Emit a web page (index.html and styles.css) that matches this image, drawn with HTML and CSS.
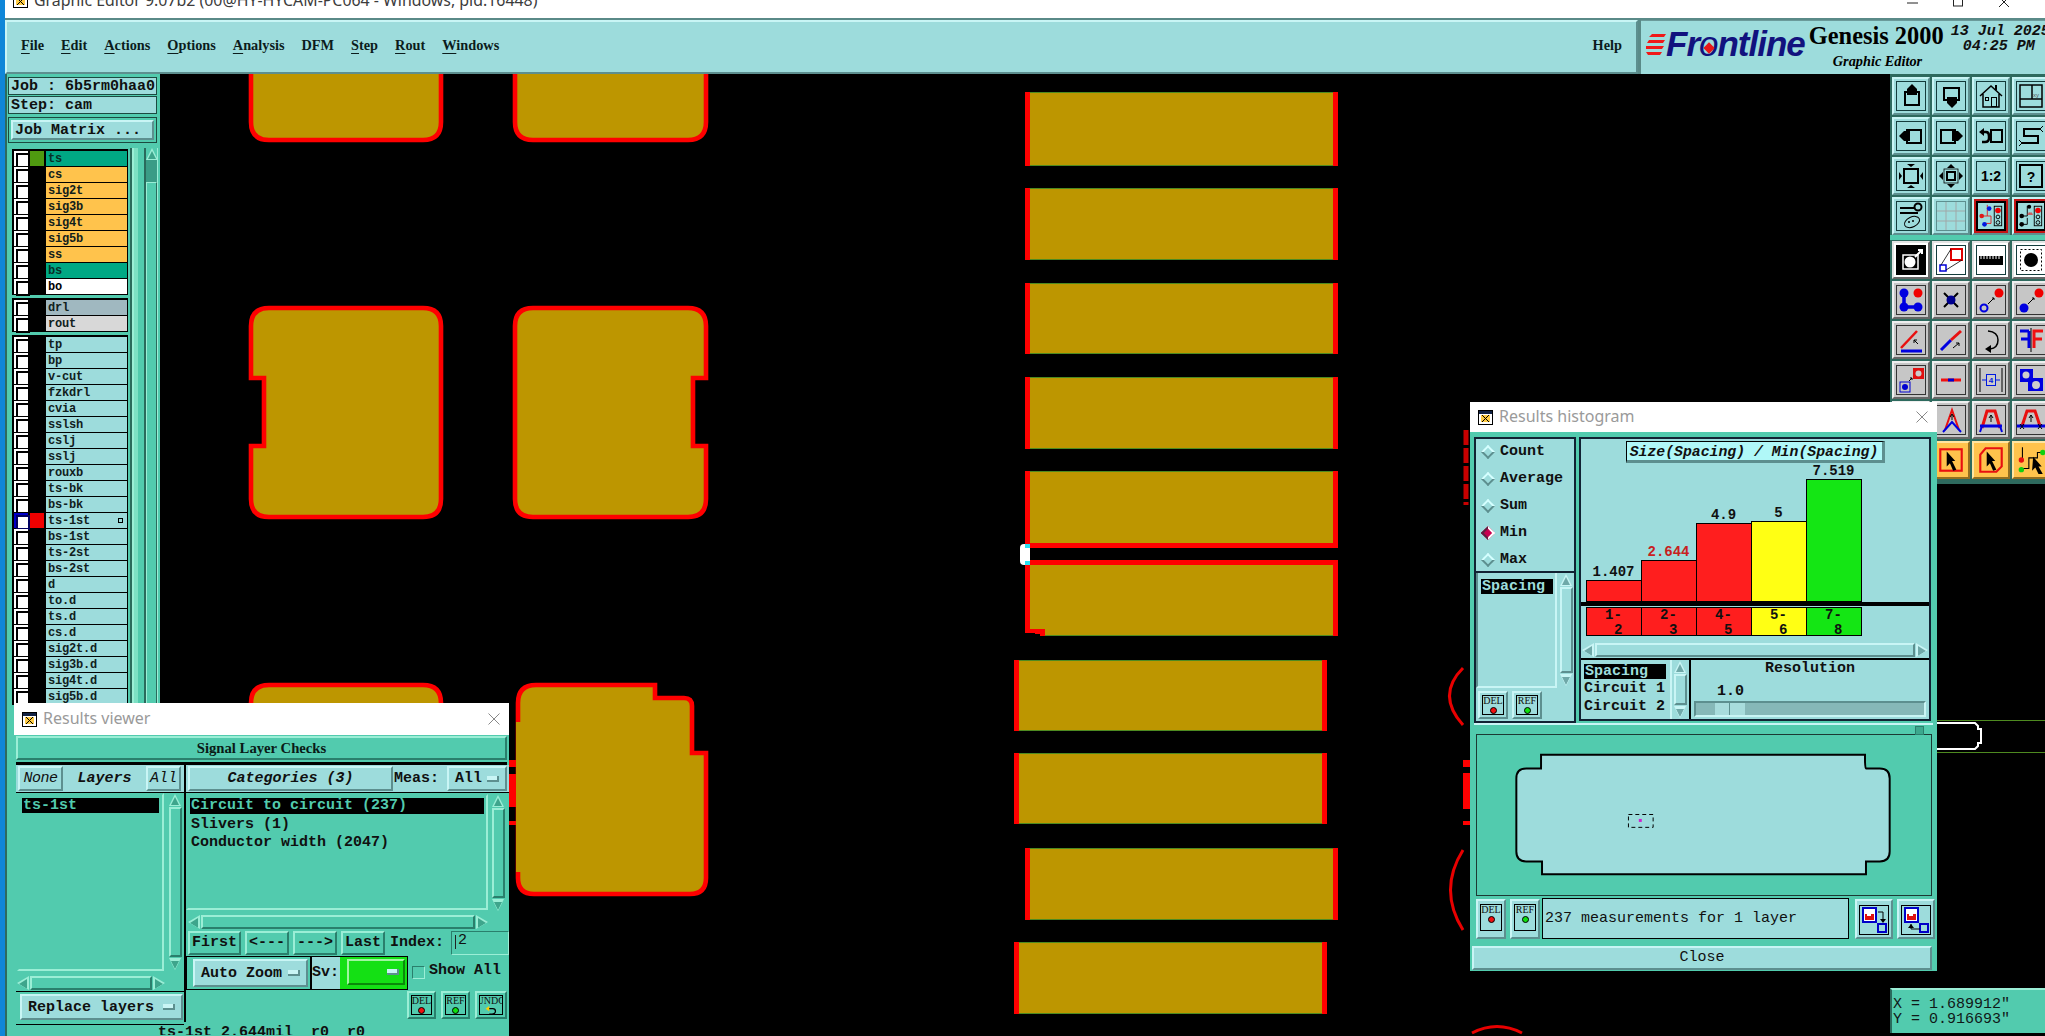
FILE: index.html
```html
<!DOCTYPE html>
<html lang="en">
<head>
<meta charset="utf-8">
<title>Graphic Editor</title>
<link rel="stylesheet" href="styles.css">
</head>
<body>
<div class="app">
  <header class="titlebar">
    <svg class="winicon" viewBox="0 0 15 15"><rect x=".5" y=".5" width="14" height="14" fill="#fff" stroke="#000"/><rect x="1" y="1" width="13" height="3" fill="#124"/><rect x="3" y="5" width="9" height="7" fill="#fc4"/><path d="M4 5l7 7M11 5l-7 7" stroke="#000"/></svg>
    <span class="titletext">Graphic Editor 9.07b2 (00@HY-HYCAM-PC064 - Windows, pid:16448)</span>
    <div class="wincontrols">
      <svg viewBox="0 0 46 10"><path d="M0 3h11" stroke="#222"/></svg>
      <svg viewBox="0 0 46 10"><rect x=".5" y="-2" width="9" height="8" fill="none" stroke="#222"/></svg>
      <svg viewBox="0 0 46 10"><path d="M0 -3l10 10M10 -3l-10 10" stroke="#222"/></svg>
    </div>
  </header>

  <div class="topbar">
    <nav class="menubar">
      <span class="menu"><u>F</u>ile</span>
      <span class="menu"><u>E</u>dit</span>
      <span class="menu"><u>A</u>ctions</span>
      <span class="menu"><u>O</u>ptions</span>
      <span class="menu"><u>A</u>nalysis</span>
      <span class="menu">DFM</span>
      <span class="menu"><u>S</u>tep</span>
      <span class="menu"><u>R</u>out</span>
      <span class="menu"><u>W</u>indows</span>
      <span class="menu help">Help</span>
    </nav>
    <div class="brand">
      <svg class="stripes" viewBox="0 0 20 24"><path d="M6 1H20L18 4H3ZM3 7H19L17 10H1ZM0 13H18L16 16H0ZM0 19H16L14 22H2Z" fill="#f01818"/></svg>
      <span class="frontline">Fr<span class="fl-o">o<i class="fl-dia"></i></span>ntline</span>
      <div class="genesis">
        <div class="gen-big">Genesis 2000</div>
        <div class="gen-small">Graphic Editor</div>
      </div>
      <div class="datebox"><div>13 Jul 2025</div><div class="timeline">04:25 PM</div></div>
    </div>
  </div>

  <div class="workspace">
    <aside class="side">
      <div class="info">Job : 6b5rm0haa0</div>
      <div class="info">Step: cam</div>
      <div class="jobwrap"><div class="raised-c jobbtn">Job Matrix ...</div></div>
      <div class="layerarea">
        <div class="layercol">
          <div class="lgroup">
            <div class="lrow"><i class="chk"></i><i class="sw sw-green"></i><span class="lab board">ts</span></div>
            <div class="lrow"><i class="chk"></i><i class="sw"></i><span class="lab sig">cs</span></div>
            <div class="lrow"><i class="chk"></i><i class="sw"></i><span class="lab sig">sig2t</span></div>
            <div class="lrow"><i class="chk"></i><i class="sw"></i><span class="lab sig">sig3b</span></div>
            <div class="lrow"><i class="chk"></i><i class="sw"></i><span class="lab sig">sig4t</span></div>
            <div class="lrow"><i class="chk"></i><i class="sw"></i><span class="lab sig">sig5b</span></div>
            <div class="lrow"><i class="chk"></i><i class="sw"></i><span class="lab sig">ss</span></div>
            <div class="lrow"><i class="chk"></i><i class="sw"></i><span class="lab board">bs</span></div>
            <div class="lrow"><i class="chk"></i><i class="sw"></i><span class="lab white">bo</span></div>
          </div>
          <div class="lgroup">
            <div class="lrow"><i class="chk"></i><i class="sw"></i><span class="lab drl">drl</span></div>
            <div class="lrow"><i class="chk"></i><i class="sw"></i><span class="lab rout">rout</span></div>
          </div>
          <div class="lgroup">
            <div class="lrow"><i class="chk"></i><i class="sw"></i><span class="lab">tp</span></div>
            <div class="lrow"><i class="chk"></i><i class="sw"></i><span class="lab">bp</span></div>
            <div class="lrow"><i class="chk"></i><i class="sw"></i><span class="lab">v-cut</span></div>
            <div class="lrow"><i class="chk"></i><i class="sw"></i><span class="lab">fzkdrl</span></div>
            <div class="lrow"><i class="chk"></i><i class="sw"></i><span class="lab">cvia</span></div>
            <div class="lrow"><i class="chk"></i><i class="sw"></i><span class="lab">sslsh</span></div>
            <div class="lrow"><i class="chk"></i><i class="sw"></i><span class="lab">cslj</span></div>
            <div class="lrow"><i class="chk"></i><i class="sw"></i><span class="lab">sslj</span></div>
            <div class="lrow"><i class="chk"></i><i class="sw"></i><span class="lab">rouxb</span></div>
            <div class="lrow"><i class="chk"></i><i class="sw"></i><span class="lab">ts-bk</span></div>
            <div class="lrow"><i class="chk"></i><i class="sw"></i><span class="lab">bs-bk</span></div>
            <div class="lrow"><i class="chk chk-blue"></i><i class="sw sw-red"></i><span class="lab">ts-1st<i class="lmark"></i></span></div>
            <div class="lrow"><i class="chk"></i><i class="sw"></i><span class="lab">bs-1st</span></div>
            <div class="lrow"><i class="chk"></i><i class="sw"></i><span class="lab">ts-2st</span></div>
            <div class="lrow"><i class="chk"></i><i class="sw"></i><span class="lab">bs-2st</span></div>
            <div class="lrow"><i class="chk"></i><i class="sw"></i><span class="lab">d</span></div>
            <div class="lrow"><i class="chk"></i><i class="sw"></i><span class="lab">to.d</span></div>
            <div class="lrow"><i class="chk"></i><i class="sw"></i><span class="lab">ts.d</span></div>
            <div class="lrow"><i class="chk"></i><i class="sw"></i><span class="lab">cs.d</span></div>
            <div class="lrow"><i class="chk"></i><i class="sw"></i><span class="lab">sig2t.d</span></div>
            <div class="lrow"><i class="chk"></i><i class="sw"></i><span class="lab">sig3b.d</span></div>
            <div class="lrow"><i class="chk"></i><i class="sw"></i><span class="lab">sig4t.d</span></div>
            <div class="lrow"><i class="chk"></i><i class="sw"></i><span class="lab">sig5b.d</span></div>
          </div>
        </div>
        <div class="lstripe"></div>
        <div class="lscroll"><i class="arr arr-up"></i><i class="ltrough"></i><i class="lthumb"></i></div>
      </div>
    </aside>

    <main class="canvas">
      <svg class="board-svg" viewBox="160 74 1885 962" preserveAspectRatio="none">
        <g class="pad">
          <path d="M251 50V122Q251 140 269 140H423Q441 140 441 122V50Z"/>
          <path d="M515 50V122Q515 140 533 140H688Q706 140 706 122V50Z"/>
          <path d="M269 308H423Q441 308 441 326V499Q441 517 423 517H269Q251 517 251 499V446H264V378H251V326Q251 308 269 308Z"/>
          <path d="M533 308H688Q706 308 706 326V378H693V446H706V499Q706 517 688 517H533Q515 517 515 499V326Q515 308 533 308Z"/>
          <path d="M251 740V703Q251 685 269 685H423Q441 685 441 703V740Z"/>
          <path d="M536 685H655V698H684Q692 698 692 706V753H706V878Q706 894 690 894H534Q518 894 518 878V703Q518 685 536 685Z"/>
        </g>
        <rect class="cu" x="516" y="722" width="5" height="150"/>
        <g class="red">
          <rect x="509" y="760" width="7" height="7"/><rect x="509" y="774" width="7" height="33"/><rect x="509" y="821" width="7" height="4"/>
        </g>
        <g class="strip">
          <rect x="1025" y="92" width="313" height="74"/>
          <rect x="1025" y="188" width="313" height="72"/>
          <rect x="1025" y="283" width="313" height="71"/>
          <rect x="1025" y="377" width="313" height="72"/>
          <rect x="1025" y="471" width="313" height="74"/>
          <rect x="1014" y="660" width="313" height="71"/>
          <rect x="1014" y="753" width="313" height="71"/>
          <rect x="1025" y="848" width="313" height="72"/>
          <rect x="1014" y="942" width="313" height="72"/>
        </g>
        <g class="red">
          <rect x="1025" y="92" width="5" height="74"/><rect x="1333" y="92" width="5" height="74"/>
          <rect x="1025" y="188" width="5" height="72"/><rect x="1333" y="188" width="5" height="72"/>
          <rect x="1025" y="283" width="5" height="71"/><rect x="1333" y="283" width="5" height="71"/>
          <rect x="1025" y="377" width="5" height="72"/><rect x="1333" y="377" width="5" height="72"/>
          <rect x="1025" y="471" width="5" height="74"/><rect x="1333" y="471" width="5" height="77"/>
          <rect x="1025" y="543" width="313" height="5"/>
          <rect x="1014" y="660" width="5" height="71"/><rect x="1322" y="660" width="5" height="71"/>
          <rect x="1014" y="753" width="5" height="71"/><rect x="1322" y="753" width="5" height="71"/>
          <rect x="1025" y="848" width="5" height="72"/><rect x="1333" y="848" width="5" height="72"/>
          <rect x="1014" y="942" width="5" height="72"/><rect x="1322" y="942" width="5" height="72"/>
        </g>
        <path class="cu" d="M1030 565H1333V636H1045V629H1030Z"/>
        <path class="red" d="M1025 560H1338V636H1333V565H1030V629H1045V636H1040V634H1035V633H1025Z"/>
        <path class="gline" d="M1030 92.500H1333M1030 165.500H1333M1030 188.500H1333M1030 259.500H1333M1030 283.500H1333M1030 353.500H1333M1030 377.500H1333M1030 448.500H1333M1030 471.500H1333M1045 635.500H1333M1019 660.500H1322M1019 730.500H1322M1019 753.500H1322M1019 823.500H1322M1030 848.500H1333M1030 919.500H1333M1019 942.500H1322M1019 1013.500H1322"/>
        <rect x="1020" y="544" width="10" height="21" rx="4" fill="#fff"/>
        <rect x="1025" y="544" width="5" height="4" fill="#28e0f0"/><rect x="1025" y="561" width="5" height="4" fill="#28e0f0"/>
        <g class="redline">
          <path d="M1463 668Q1436 695 1463 725"/>
          <path d="M1463 850Q1438 890 1463 930"/>
          <path d="M1472 1033Q1497 1020 1522 1033"/>
        </g>
        <path class="dash" d="M1466 430V505"/>
        <g class="red">
          <rect x="1463" y="760" width="7" height="7"/><rect x="1463" y="773" width="7" height="36"/><rect x="1463" y="821" width="7" height="4"/>
        </g>
        <path class="gline" d="M1937 720.500H2045M1937 752.500H2045"/>
        <path class="wline" d="M1937 723H1975L1978 726V729H1981V743H1978V746L1975 749H1937"/>
      </svg>

      <div class="toolbox">
        <div class="tbgroup">
          <button class="tb"><svg class="ic" viewBox="0 0 28 28"><rect x="8" y="10" width="14" height="13" fill="none" stroke="#000" stroke-width="2"/><path d="M15 2l5 5v6H10V7z"/></svg></button>
          <button class="tb"><svg class="ic" viewBox="0 0 28 28"><rect x="7" y="6" width="15" height="12" fill="none" stroke="#000" stroke-width="2"/><path d="M15 26l5-5v-6H10v6z"/></svg></button>
          <button class="tb"><svg class="ic" viewBox="0 0 28 28"><path d="M3 14L14 4 25 14M6 12V25H22V12" fill="none" stroke="#000" stroke-width="1.500"/><path d="M19 8V3" stroke="#000" stroke-width="2"/><rect x="14.500" y="15.500" width="5" height="9" fill="none" stroke="#000"/><rect x="8.500" y="15.500" width="3" height="3" fill="none" stroke="#000"/></svg></button>
          <button class="tb"><svg class="ic" viewBox="0 0 28 28"><rect x="3" y="3" width="22" height="22" fill="none" stroke="#000" stroke-width="1.500"/><path d="M3 17H25M15 3V17" stroke="#000" stroke-width="1.500"/><text x="16" y="15" class="tiny">xy</text></svg></button>

          <button class="tb"><svg class="ic" viewBox="0 0 28 28"><rect x="10" y="8" width="14" height="13" fill="none" stroke="#000" stroke-width="2"/><path d="M2 14l5-5h6v10H7z"/></svg></button>
          <button class="tb"><svg class="ic" viewBox="0 0 28 28"><rect x="4" y="8" width="14" height="13" fill="none" stroke="#000" stroke-width="2"/><path d="M26 14l-5-5h-6v10h6z"/></svg></button>
          <button class="tb"><svg class="ic" viewBox="0 0 28 28"><rect x="14" y="8" width="11" height="12" fill="none" stroke="#000" stroke-width="2"/><path d="M7 10h2q3 0 3 4v2q0 4-4 4H5" fill="none" stroke="#000" stroke-width="2.500"/><path d="M2 10l5-4v8z"/></svg></button>
          <button class="tb"><svg class="ic" viewBox="0 0 28 28"><path d="M23 7H7V14H21V21H5" fill="none" stroke="#000" stroke-width="2"/><path d="M23 7l3-3M23 7l3 3M5 21l-3-3M5 21l-3 3" stroke="#000"/></svg></button>

          <button class="tb"><svg class="ic" viewBox="0 0 28 28"><rect x="7" y="7" width="14" height="14" fill="none" stroke="#000" stroke-width="2"/><path d="M14 5l-4-3h8zM14 23l-4 3h8zM5 14l-3-4v8zM23 14l3-4v8z"/></svg></button>
          <button class="tb"><svg class="ic" viewBox="0 0 28 28"><rect x="10" y="10" width="8" height="8" fill="none" stroke="#000" stroke-width="2"/><rect x="7" y="7" width="14" height="14" fill="none" stroke="#000" stroke-width=".8"/><path d="M14 2l-4 4h8zM14 26l-4-4h8zM2 14l4-4v8zM26 14l-4-4v8z"/></svg></button>
          <button class="tb"><svg class="ic" viewBox="0 0 28 28"><text x="14" y="19" class="ratio">1:2</text></svg></button>
          <button class="tb"><svg class="ic" viewBox="0 0 28 28"><rect x="3" y="3" width="22" height="22" fill="none" stroke="#000" stroke-width="2"/><text x="14" y="20" class="ratio">?</text></svg></button>

          <button class="tb"><svg class="ic" viewBox="0 0 28 28"><path d="M3 6H18M3 11H21" stroke="#000" stroke-width="2"/><circle cx="21" cy="5" r="3.500" fill="none" stroke="#000" stroke-width="2"/><ellipse cx="15" cy="20" rx="8" ry="5" fill="none" stroke="#000" transform="rotate(-25 15 20)"/><circle cx="12" cy="20" r="1"/><circle cx="16" cy="19" r="1"/></svg></button>
          <button class="tb"><svg class="ic ic-soft" viewBox="0 0 28 28"><path d="M9 0V28M19 0V28M0 9H28M0 19H28" stroke="#a0a8a8"/></svg></button>
          <button class="tb"><svg class="ic ic-red" viewBox="0 0 28 28"><path d="M10 2V14H14V22H7M2 14H10" fill="none" stroke="#e02020"/><circle cx="12" cy="6" r="2.500" fill="#0018e0"/><circle cx="4" cy="14" r="2.500" fill="#e01818"/><circle cx="7" cy="23" r="2.500" fill="#0018e0"/><rect x="17.500" y="3.500" width="8" height="21" fill="none" stroke="#000"/><circle cx="21.500" cy="8" r="3" fill="#f00000"/><circle cx="21.500" cy="15" r="2" fill="none" stroke="#000"/><circle cx="21.500" cy="21" r="2" fill="none" stroke="#000"/></svg></button>
          <button class="tb"><svg class="ic ic-red" viewBox="0 0 28 28"><path d="M10 3V14M3 14H10M10 16V23H4" fill="none" stroke="#000"/><path d="M10 12H16M12 10V12M14 10V12" stroke="#e02020"/><circle cx="12" cy="4" r="2.200"/><circle cx="4" cy="14" r="2.500"/><circle cx="4" cy="23" r="2.500"/><rect x="17.500" y="3.500" width="8" height="21" fill="none" stroke="#000"/><circle cx="21.500" cy="8" r="3" fill="#f00000"/><circle cx="21.500" cy="15" r="2" fill="none" stroke="#000"/><circle cx="21.500" cy="21" r="2" fill="none" stroke="#000"/></svg></button>
        </div>
        <div class="tbgroup tbgroup2">
          <button class="tb tb-on"><svg class="ic ic-dark" viewBox="0 0 28 28"><rect x="6" y="9" width="15" height="14" fill="none" stroke="#fff" stroke-width="1.500"/><circle cx="13" cy="16" r="5.500" fill="#fff"/><path d="M18 11l7-7M21 4h4v4" stroke="#fff" stroke-width="2" fill="none"/></svg></button>
          <button class="tb tb-on"><svg class="ic" viewBox="0 0 28 28"><rect x="14" y="3" width="11" height="11" fill="none" stroke="#e00000" stroke-width="2"/><rect x="3" y="19" width="6" height="6" fill="none" stroke="#0000d8" stroke-width="1.500"/><path d="M14 3L4 19M25 14L9 24" stroke="#000" stroke-width=".8"/></svg></button>
          <button class="tb tb-on"><svg class="ic" viewBox="0 0 28 28"><path d="M2 10H26V19H2Z"/><path d="M4 9V13M7 9V13M10 9V13M13 9V13M16 9V13M19 9V13M22 9V13" stroke="#fff"/></svg></button>
          <button class="tb tb-on"><svg class="ic" viewBox="0 0 28 28"><rect x="3.500" y="3.500" width="21" height="21" fill="none" stroke="#000" stroke-dasharray="2 2"/><circle cx="14" cy="14" r="7"/></svg></button>

          <button class="tb tb-g"><svg class="ic" viewBox="0 0 28 28"><path d="M7 7V21H21" fill="none" stroke="#0000e0" stroke-width="3.500"/><circle cx="7" cy="7" r="4.500" fill="#0000e0"/><circle cx="7" cy="21" r="4.500" fill="#0000e0"/><circle cx="21" cy="21" r="4.500" fill="#0000e0"/><circle cx="21" cy="7" r="4.500" fill="#f00000"/></svg></button>
          <button class="tb tb-g"><svg class="ic" viewBox="0 0 28 28"><path d="M7 7L21 21M21 7L7 21" stroke="#000" stroke-width="2"/><circle cx="14" cy="14" r="4.500" fill="#000090"/></svg></button>
          <button class="tb tb-g"><svg class="ic" viewBox="0 0 28 28"><circle cx="22" cy="7" r="4.500" fill="#f00000"/><circle cx="7" cy="22" r="3.500" fill="none" stroke="#0000e0" stroke-width="2"/><path d="M11 18L17 12M15 12H17V14" stroke="#000" fill="none"/></svg></button>
          <button class="tb tb-g"><svg class="ic" viewBox="0 0 28 28"><circle cx="22" cy="7" r="4.500" fill="#f00000"/><circle cx="7" cy="22" r="4.500" fill="#0000e0"/><path d="M11 18L17 12M15 12H17V14" stroke="#000" fill="none"/></svg></button>

          <button class="tb tb-g"><svg class="ic" viewBox="0 0 28 28"><path d="M4 22L20 5" stroke="#e81010" stroke-width="2.500"/><path d="M4 25H25" stroke="#0000e0" stroke-width="3"/><path d="M21 18L17 14M17 17V14H20" stroke="#000" fill="none"/></svg></button>
          <button class="tb tb-g"><svg class="ic" viewBox="0 0 28 28"><path d="M4 24L14 14" stroke="#0000e0" stroke-width="3"/><path d="M14 14L24 5" stroke="#e81010" stroke-width="3"/><path d="M16 22L22 17M19 17H22V20" stroke="#000" fill="none"/></svg></button>
          <button class="tb tb-g"><svg class="ic" viewBox="0 0 28 28"><path d="M11 5Q21 6 21 14T13 23" fill="none" stroke="#000" stroke-width="1.500"/><path d="M8 23l6-4v8z"/></svg></button>
          <button class="tb tb-g"><svg class="ic" viewBox="0 0 28 28"><path d="M12 5H3M12 5V22M12 13H4" fill="none" stroke="#0000e0" stroke-width="3"/><path d="M14 2V26" stroke="#000"/><path d="M17 22V5H26M17 13H25" fill="none" stroke="#f01010" stroke-width="3"/></svg></button>

          <button class="tb tb-g"><svg class="ic" viewBox="0 0 28 28"><rect x="16" y="2" width="11" height="11" fill="#e01010"/><circle cx="21.500" cy="7.500" r="3" fill="#ccc"/><rect x="3" y="16" width="10" height="10" fill="none" stroke="#0000d0"/><circle cx="8" cy="21" r="3" fill="#0000d0"/><path d="M12 15L15 12M13 12H15V14" stroke="#000" fill="none"/></svg></button>
          <button class="tb tb-g"><svg class="ic" viewBox="0 0 28 28"><path d="M4 14H24" stroke="#f01010" stroke-width="3"/><path d="M11 14H17" stroke="#0000d0" stroke-width="3"/></svg></button>
          <button class="tb tb-g"><svg class="ic" viewBox="0 0 28 28"><path d="M3 2V26M25 2V26" stroke="#000"/><path d="M5 14H23" stroke="#0018e0"/><rect x="9.500" y="8.500" width="9" height="11" fill="#ccc" stroke="#0018e0"/><text x="14" y="17" class="tiny4">4</text></svg></button>
          <button class="tb tb-g"><svg class="ic" viewBox="0 0 28 28"><rect x="3" y="3" width="13" height="13" fill="#0000e0"/><rect x="11" y="12" width="15" height="13" fill="#0000e0"/><circle cx="9" cy="9" r="3.500" fill="#ccc"/><circle cx="19" cy="19" r="4" fill="#ccc"/></svg></button>

          <button class="tb tb-g"><svg class="ic" viewBox="0 0 28 28"></svg></button>
          <button class="tb tb-g"><svg class="ic" viewBox="0 0 28 28"><path d="M8 24L15 4 22 24" fill="none" stroke="#e81010" stroke-width="2"/><path d="M6 26L15 16 24 26" fill="none" stroke="#0000e0" stroke-width="2"/><path d="M15 9V14M13 11L15 8 17 11" stroke="#000" fill="none"/></svg></button>
          <button class="tb tb-g"><svg class="ic" viewBox="0 0 28 28"><path d="M5 22L10 5H18L23 22" fill="none" stroke="#e81010" stroke-width="3"/><path d="M3 20H25" stroke="#0000e0" stroke-width="3"/><path d="M3 26L5 20M25 26L23 20" stroke="#0000e0" stroke-width="2"/><path d="M14 9V16M12 12L14 9 16 12" stroke="#000" fill="none"/></svg></button>
          <button class="tb tb-g"><svg class="ic" viewBox="0 0 28 28"><path d="M5 20L10 5H18L23 20" fill="none" stroke="#e81010" stroke-width="3"/><path d="M0 20H28" stroke="#0000e0" stroke-width="3"/><path d="M3 18L7 23M7 18L3 23M21 18L25 23M25 18L21 23" stroke="#000"/><path d="M14 9V16M12 12L14 9 16 12" stroke="#000" fill="none"/></svg></button>

          <button class="tb tb-o"><svg class="ic" viewBox="0 0 28 28"></svg></button>
          <button class="tb tb-o"><svg class="ic" viewBox="0 0 28 28"><rect x="4" y="4" width="20" height="20" fill="none" stroke="#e81010" stroke-width="2"/><path d="M10 6L18 15H15L19 23 16 24 13 17 10 20Z"/></svg></button>
          <button class="tb tb-o"><svg class="ic" viewBox="0 0 28 28"><path d="M9 3H24V20L19 25H4V9Z" fill="none" stroke="#e81010" stroke-width="2"/><path d="M10 6L18 15H15L19 23 16 24 13 17 10 20Z"/></svg></button>
          <button class="tb tb-o"><svg class="ic" viewBox="0 0 28 28"><path d="M6 2V14M6 22H12V12H20V7H27" fill="none" stroke="#000"/><circle cx="5" cy="14" r="2.500" fill="#e81010"/><circle cx="5" cy="23" r="2.500" fill="#10d010"/><circle cx="25" cy="7" r="2.500" fill="#10d010"/><path d="M16 11L24 20H21L25 27H21L18 21 15 24Z"/></svg></button>
        </div>
      </div>

      <div class="coords"><div>X = 1.689912"</div><div>Y = 0.916693"</div></div>
    </main>
  </div>
</div>

<section class="rv window">
  <div class="wtitle">
    <svg class="winicon" viewBox="0 0 15 15"><rect x=".5" y=".5" width="14" height="14" fill="#fff" stroke="#000"/><rect x="1" y="1" width="13" height="3" fill="#124"/><rect x="3" y="5" width="9" height="7" fill="#fc4"/><path d="M4 5l7 7M11 5l-7 7" stroke="#000"/></svg>
    <span>Results viewer</span>
    <svg class="wclose" viewBox="0 0 12 12"><path d="M.5.5l11 11M11.500.5l-11 11" stroke="#888"/></svg>
  </div>
  <div class="rv-body">
    <div class="rv-bar raised-t">Signal Layer Checks</div>
    <div class="rv-main">
      <div class="rv-left">
        <div class="rv-head">
          <span class="raised-c btn-i btn-none">None</span>
          <span class="rv-headlabel">Layers</span>
          <span class="raised-c btn-i btn-all">All</span>
        </div>
        <div class="rv-lists">
          <div class="sunk-t list-left"><div class="sel">ts-1st</div></div>
          <div class="vsb"><i class="arr arr-up"></i><i class="thumb"></i><i class="arr arr-down"></i></div>
        </div>
        <div class="hsb hsb-left"><i class="arr arr-left"></i><i class="thumb"></i><i class="arr arr-right"></i></div>
        <div class="rv-replace"><div class="raised-c dd replace">Replace layers<i class="ddmark"></i></div></div>
      </div>
      <div class="rv-right">
        <div class="rv-head rv-head-r">
          <span class="raised-c btn-i btn-cat">Categories (3)</span>
          <span class="meas">Meas:</span>
          <div class="raised-c dd measdd">All<i class="ddmark"></i></div>
        </div>
        <div class="rv-lists rv-lists-r">
          <div class="sunk-t list-right">
            <div class="sel">Circuit to circuit (237)</div>
            <div class="item">Slivers (1)</div>
            <div class="item">Conductor width (2047)</div>
          </div>
          <div class="vsb"><i class="arr arr-up"></i><i class="thumb"></i><i class="arr arr-down"></i></div>
        </div>
        <div class="hsb hsb-right"><i class="arr arr-left"></i><i class="thumb"></i><i class="arr arr-right"></i></div>
        <div class="navrow">
          <span class="raised-t nav nav-l">First</span>
          <span class="raised-t nav">&lt;---</span>
          <span class="raised-t nav">---&gt;</span>
          <span class="raised-t nav">Last</span>
          <span class="navlabel">Index:</span>
          <span class="indexinput">2<i class="ibeam"></i></span>
        </div>
        <div class="zoomrow">
          <div class="zoombox">
            <div class="zoompad"><div class="raised-c dd autozoom">Auto Zoom<i class="ddmark"></i></div></div>
            <span class="svlabel">Sv:</span>
            <div class="svgreen"><div class="svbtn"><i class="ddmark"></i></div></div>
          </div>
          <i class="showchk"></i>
          <span class="showlabel">Show All</span>
        </div>
        <div class="toolrow">
          <div class="raised-t toolbtn"><div class="toolin"><span>DEL</span><i class="dot dot-r"></i></div></div>
          <div class="raised-t toolbtn"><div class="toolin"><span>REF</span><i class="dot dot-g"></i></div></div>
          <div class="raised-t toolbtn toolwide"><div class="toolin"><span>UNDO</span><svg class="undo" viewBox="0 0 12 9"><path d="M3 3h5q3 0 3 3t-4 3H4" fill="none" stroke="#000" stroke-width="1.400"/><path d="M0 3l4-3v6z" fill="#fc0"/></svg></div></div>
        </div>
      </div>
    </div>
    <div class="rv-status">ts-1st 2.644mil  r0  r0</div>
  </div>
</section>

<section class="hist window">
  <div class="wtitle">
    <svg class="winicon" viewBox="0 0 15 15"><rect x=".5" y=".5" width="14" height="14" fill="#fff" stroke="#000"/><rect x="1" y="1" width="13" height="3" fill="#124"/><rect x="3" y="5" width="9" height="7" fill="#fc4"/><path d="M4 5l7 7M11 5l-7 7" stroke="#000"/></svg>
    <span>Results histogram</span>
    <svg class="wclose" viewBox="0 0 12 12"><path d="M.5.5l11 11M11.500.5l-11 11" stroke="#888"/></svg>
  </div>
  <div class="hist-body">
    <div class="hist-top">
      <div class="hist-left">
        <div class="radios">
          <div class="radio"><i class="dia"></i>Count</div>
          <div class="radio"><i class="dia"></i>Average</div>
          <div class="radio"><i class="dia"></i>Sum</div>
          <div class="radio"><i class="dia dia-on"></i>Min</div>
          <div class="radio"><i class="dia"></i>Max</div>
        </div>
        <div class="metricbox">
          <div class="metriclist">
            <div class="sunk-c metricsunk"><div class="sel sel-c">Spacing</div></div>
            <div class="vsb vsb-c"><i class="arr arr-up"></i><i class="thumb"></i><i class="arr arr-down"></i></div>
          </div>
          <div class="metricbtns">
            <div class="raised-c toolbtn"><div class="toolin"><span>DEL</span><i class="dot dot-r"></i></div></div>
            <div class="raised-c toolbtn"><div class="toolin"><span>REF</span><i class="dot dot-g"></i></div></div>
          </div>
        </div>
      </div>
      <div class="chart">
        <div class="chart-title">Size(Spacing) / Min(Spacing)</div>
        <div class="bars">
          <div class="barcol"><span class="val">1.407</span><i class="bar b-red" style="height:22px"></i></div>
          <div class="barcol"><span class="val val-red">2.644</span><i class="bar b-red" style="height:42px"></i></div>
          <div class="barcol"><span class="val">4.9</span><i class="bar b-red" style="height:79px"></i></div>
          <div class="barcol"><span class="val">5</span><i class="bar b-yel" style="height:81px"></i></div>
          <div class="barcol"><span class="val">7.519</span><i class="bar b-grn" style="height:123px"></i></div>
        </div>
        <div class="cells">
          <div class="cell b-red"><span>1-</span><span class="c2">2</span></div>
          <div class="cell b-red"><span>2-</span><span class="c2">3</span></div>
          <div class="cell b-red"><span>4-</span><span class="c2">5</span></div>
          <div class="cell b-yel"><span>5-</span><span class="c2">6</span></div>
          <div class="cell b-grn"><span>7-</span><span class="c2">8</span></div>
        </div>
        <div class="hsb hsb-c"><i class="arr arr-left"></i><i class="thumb"></i><i class="arr arr-right"></i></div>
        <div class="chart-foot">
          <div class="footlist">
            <div class="sel sel-c footsel">Spacing</div>
            <div>Circuit 1</div>
            <div>Circuit 2</div>
          </div>
          <div class="vsb vsb-c footsb"><i class="arr arr-up"></i><i class="thumb"></i><i class="arr arr-down"></i></div>
          <div class="res">
            <div class="res-title">Resolution</div>
            <div class="res-val">1.0</div>
            <div class="res-track"><i class="res-thumb"></i></div>
          </div>
        </div>
      </div>
    </div>
    <div class="sash"><i class="sashmark"></i></div>
    <div class="overview">
      <svg class="ov-svg" viewBox="0 0 456 162">
        <path d="M63 20H391V24Q391 34 392 34H406Q416 34 416 44V118Q416 128 406 128H392V141H64V128H48Q38 128 38 118V44Q38 34 48 34H63Z" fill="#9ddcdc" stroke="#000" stroke-width="2"/>
        <rect x="151.500" y="80.500" width="25" height="13" fill="none" stroke="#000" stroke-dasharray="4 3"/>
        <rect x="162" y="85" width="3" height="3" fill="#d020d0"/>
      </svg>
    </div>
    <div class="hist-row">
      <div class="raised-c toolbtn toolbtn-b"><div class="toolin"><span>DEL</span><i class="dot dot-r"></i></div></div>
      <div class="raised-c toolbtn toolbtn-b"><div class="toolin"><span>REF</span><i class="dot dot-g"></i></div></div>
      <div class="msgbox">237 measurements for 1 layer</div>
      <div class="raised-c iconbtn"><svg viewBox="0 0 30 30" class="toolsvg"><rect x=".5" y=".5" width="29" height="29" fill="none" stroke="#000"/><rect x="4" y="3" width="13" height="14" fill="#fff" stroke="#0000c8" stroke-width="2"/><path d="M6 15V9H8V11H12V9H15V15Z" fill="#e01010"/><rect x="19" y="19" width="8" height="8" fill="none" stroke="#0000c8" stroke-width="2"/><path d="M19 7H24V15" fill="none" stroke="#000"/><path d="M21 14H27L24 18Z"/></svg></div>
      <div class="raised-c iconbtn"><svg viewBox="0 0 30 30" class="toolsvg"><rect x=".5" y=".5" width="29" height="29" fill="none" stroke="#000"/><rect x="4" y="3" width="13" height="14" fill="#fff" stroke="#0000c8" stroke-width="2"/><path d="M6 15V9H8V11H12V9H15V15Z" fill="#e01010"/><rect x="19" y="19" width="8" height="8" fill="none" stroke="#0000c8" stroke-width="2"/><path d="M10 19V24H19" fill="none" stroke="#000"/><path d="M7 23H13L10 19Z"/></svg></div>
    </div>
    <div class="raised-c closebtn">Close</div>
  </div>
</section>
</body>
</html>
```
FILE: styles.css
```css
* { box-sizing: border-box; }
html, body { margin: 0; padding: 0; }
body { width: 2045px; height: 1036px; overflow: hidden; background: #0f86d8; position: relative; font-family: "Liberation Mono", monospace; color: #101010; }
i { display: block; font-style: normal; }
button { padding: 0; margin: 0; font: inherit; }

.app { margin-left: 5px; width: 2040px; height: 1036px; display: flex; flex-direction: column; background: #000; }

/* native title bar */
.titlebar { height: 18px; flex: none; background: #fff; display: flex; align-items: flex-start; padding-left: 8px; overflow: hidden; position: relative; }
.titlebar .winicon { margin-top: -7px; flex: none; }
.titletext { font: 15.900px/18px "Noto Sans", sans-serif; color: #3c3c3c; margin: -9px 0 0 6px; white-space: nowrap; }
.wincontrols { margin-left: auto; display: flex; }
.wincontrols svg { width: 46px; height: 10px; overflow: visible; }
.winicon { width: 15px; height: 15px; }

/* top menu + brand */
.topbar { height: 56px; flex: none; display: flex; background: #5a8a88; padding-top: 2px; gap: 3px; }
.menubar { width: 1633px; display: flex; align-items: center; gap: 17px; padding: 0 14px 4px 14px; background: #9ddcdc; border: 2px solid; border-color: #c9f5f5 #5d8f8f #5d8f8f #c9f5f5; font: bold 14.300px "Liberation Serif", serif; color: #0c1c1c; }
.menu { white-space: nowrap; }
.menu u { text-underline-offset: 3px; }
.help { margin-left: auto; }
.brand { flex: 1; position: relative; background: #9ddcdc; border-top: 1px solid #6a9a9a; display: flex; align-items: flex-start; overflow: hidden; padding-left: 5px; }
.stripes { width: 20px; height: 24px; margin-top: 12px; flex: none; }
.frontline { font: italic bold 35px/56px "Liberation Sans", sans-serif; letter-spacing: -1px; color: #12127e; margin-top: -5px; white-space: nowrap; }
.fl-o { position: relative; display: inline-block; font-weight: normal; }
.fl-dia { position: absolute; left: 6px; top: 28px; width: 8px; height: 8px; background: #e81818; transform: rotate(45deg); }
.genesis { margin-left: 4px; flex: none; }
.gen-big { font: bold 24.400px/28px "Liberation Serif", serif; color: #000; margin-top: 1px; white-space: nowrap; }
.gen-small { font: italic bold 14.300px/18px "Liberation Serif", serif; color: #000; margin: 2px 0 0 24px; white-space: nowrap; }
.datebox { margin-left: 7px; font: italic bold 15px/15px "Liberation Mono", monospace; color: #101010; white-space: nowrap; padding-top: 3px; }
.timeline { padding-left: 12px; }

.workspace { flex: 1; display: flex; min-height: 0; }

/* left layer panel */
.side { width: 155px; flex: none; background: #52cbae; border-left: 2px solid #2e6a5e; padding: 3px 3px 0 1px; overflow: hidden; }
.info { height: 18px; border: 1px solid #1c4a40; background: #9ddcdc; font: bold 15px/18px "Liberation Mono", monospace; padding-left: 2px; margin-bottom: 1px; white-space: pre; }
.jobwrap { margin-top: 3px; height: 26px; border: 1px solid #1c4a40; padding: 2px; }
.jobbtn { height: 20px; font: bold 15px/18px "Liberation Mono", monospace; padding-left: 2px; }
.layerarea { display: flex; margin-top: 5px; height: 900px; }
.layercol { width: 122px; padding: 1px 0 0 4px; display: flex; flex-direction: column; gap: 3px; flex: none; }
.lgroup { width: 116px; background: #000; padding: 2px 1px 1px 2px; display: flex; flex-direction: column; gap: 1px; }
.lrow { height: 15px; display: flex; }
.chk { width: 14px; height: 15px; background: #fff; position: relative; flex: none; margin-right: 1px; }
.chk::after { content: ""; position: absolute; left: 2px; top: 2px; width: 10px; height: 11px; border: 2px solid #000; background: #fff; }
.chk-blue { background: #0000c8; }
.chk-blue::after { border-color: #000060; }
.sw { width: 14px; height: 15px; margin: 0 2px 0 1px; background: #000; flex: none; }
.sw-green { background: #4f9a10; }
.sw-red { background: #f00000; }
.lab { flex: 1; background: #9ddcdc; font: bold 12px/16px "Liberation Mono", monospace; letter-spacing: -.2px; padding-left: 2px; position: relative; overflow: hidden; color: #10201c; }
.board { background: #00a884; color: #083028; }
.sig { background: #ffc34c; }
.white { background: #fff; color: #000; }
.drl { background: #a0b8c0; }
.rout { background: #d8d8d8; }
.lmark { position: absolute; right: 4px; top: 5px; width: 5px; height: 5px; border: 1px solid #000; background: #9ddcdc; }
.lstripe { width: 14px; flex: none; background: linear-gradient(90deg, #2a6a5c 0 2px, #9beed6 2px 4px, #7de0c4 4px 8px, #52cbae 8px 14px); }
.lscroll { width: 14px; flex: none; display: flex; flex-direction: column; background: #52cbae; border-left: 2px solid #2a6a5c; border-right: 1px solid #9beed6; }
.ltrough { height: 22px; background: #3a9c86; }
.lthumb { flex: 1; background: #52cbae; border: 1px solid; border-color: #9beed6 #2a6a5c #2a6a5c #9beed6; }

/* bevels */
.raised-c { background: #9ddcdc; border: 2px solid; border-color: #c9f5f5 #5d8f8f #5d8f8f #c9f5f5; }
.raised-t { background: #52cbae; border: 2px solid; border-color: #9beed6 #2a7f6c #2a7f6c #9beed6; }
.sunk-t { background: #52cbae; border: 2px solid; border-color: #2a7f6c #9beed6 #9beed6 #2a7f6c; }
.sunk-c { background: #9ddcdc; border: 2px solid; border-color: #5d8f8f #c9f5f5 #c9f5f5 #5d8f8f; }

/* canvas */
.canvas { flex: 1; position: relative; min-width: 0; background: #000; }
.board-svg { display: block; width: 1885px; height: 962px; }
.pad path { fill: #bd9600; stroke: #ff0000; stroke-width: 4.600; }
.cu { fill: #bd9600; }
.strip rect { fill: #bd9600; }
.red { fill: #ff0000; }
.redline path { fill: none; stroke: #e80000; stroke-width: 3; }
.dash { stroke: #c80000; stroke-width: 5; stroke-dasharray: 15 3; fill: none; }
.gline { fill: none; stroke: #4e8a20; stroke-width: 1; }
.wline { fill: none; stroke: #fff; stroke-width: 2; }

/* right tool panel */
.toolbox { position: absolute; right: 0; top: 0; width: 155px; height: 410px; background: #2e6a5e; padding: 3px 0 0 2px; }
.tbgroup { display: grid; grid-template-columns: repeat(4, 38px); grid-auto-rows: 38px; gap: 2px; }
.tbgroup2 { margin-top: 6px; position: relative; }
.tbgroup2::before { content: ""; position: absolute; left: -2px; right: -30px; top: -6px; height: 5px; background: #52cbae; }
.tb { width: 38px; height: 38px; background: #9ddcdc; border: 2px solid; border-color: #c9f5f5 #5d8f8f #5d8f8f #c9f5f5; display: block; }
.ic { display: block; width: 30px; height: 30px; margin: 2px; border: 1px solid #143c3c; }
.ic-soft { border-color: #5d8f8f; }
.ic-red { border: 2px solid #000; outline: 2px solid #c41414; background: #9ddcdc; }
.ic-dark { background: #000; border-color: #000; }
.tb-on { background: #fff; border-color: #e4e4e4 #666 #666 #e4e4e4; }
.tb-g { background: #c6c6c6; border-color: #efefef #666 #666 #efefef; }
.tb-g .ic { border-color: #333; }
.tb-o { background: #ffc34c; border-color: #ffe4a0 #946f20 #946f20 #ffe4a0; }
.tb-o .ic { border: 0; }
.tiny { font: 6px "Liberation Sans", sans-serif; fill: #555; }
.tiny4 { font: bold 8px "Liberation Sans", sans-serif; fill: #0018e0; text-anchor: middle; }
.ratio { font: bold 14px "Liberation Sans", sans-serif; text-anchor: middle; fill: #000; }

.coords { position: absolute; right: 0; bottom: 3px; width: 155px; height: 45px; background: #52cbae; border-top: 2px solid #9beed6; border-left: 2px solid #2a6a5c; font: 15px/15px "Liberation Mono", monospace; padding: 7px 0 0 1px; color: #101818; }

/* floating windows */
.window { position: absolute; background: #52cbae; }
.wtitle { height: 32px; background: #fff; display: flex; align-items: center; padding: 0 9px 0 8px; font: 16px "Noto Sans", sans-serif; color: #9a9a9a; }
.wtitle span { margin: -2px 0 0 6px; }
.wclose { width: 12px; height: 12px; margin-left: auto; }

/* results viewer */
.rv { left: 14px; top: 703px; width: 495px; height: 333px; overflow: hidden; }
.rv-body { padding: 1px 2px 0; }
.rv-bar { height: 24px; font: bold 14.700px/20px "Liberation Serif", serif; text-align: center; color: #0a1a16; }
.rv-main { margin-top: 2px; border-top: 3px solid #000; display: flex; height: 260px; gap: 2px; background: #000; }
.rv-left { width: 168px; flex: none; background: #52cbae; display: flex; flex-direction: column; }
.rv-right { flex: 1; background: #52cbae; display: flex; flex-direction: column; }
.rv-head { height: 28px; flex: none; display: flex; background: #9ddcdc; border-bottom: 1px solid #000; padding: 1px 2px; align-items: stretch; }
.btn-i { font: italic bold 15px/21px "Liberation Mono", monospace; text-align: center; }
.btn-none { width: 45px; font-weight: normal; letter-spacing: -.5px; }
.rv-headlabel { width: 83px; text-align: center; font: italic bold 15px/26px "Liberation Mono", monospace; }
.btn-all { width: 35px; font-weight: normal; }
.rv-lists { height: 178px; display: flex; flex: none; }
.list-left { width: 150px; padding: 3px; margin-left: 1px; border-color: #52cbae #9beed6 #9beed6 #52cbae; }
.sel { background: #000; color: #52cbae; font: bold 15px/15px "Liberation Mono", monospace; padding-left: 1px; white-space: pre; }
.sel-c { color: #9ddcdc; }
.item { font: bold 15px/18px "Liberation Mono", monospace; white-space: pre; padding: 1px 0 0 1px; margin-bottom: -1px; }
.vsb { width: 13px; margin: 1px 2px 1px 5px; flex: none; display: flex; flex-direction: column; gap: 1px; }
.thumb { flex: 1; border: 2px solid; border-color: #9beed6 #2a7f6c #2a7f6c #9beed6; background: #52cbae; }
.vsb-c .thumb, .hsb-c .thumb { background: #9ddcdc; border-color: #c9f5f5 #5d8f8f #5d8f8f #c9f5f5; }
.arr { width: 12px; height: 12px; flex: none; background: #9beed6; position: relative; }
.arr::after { content: ""; position: absolute; inset: 3px 2px 1px; clip-path: inherit; background: #3ea58c; }
.arr-up { clip-path: polygon(50% 0, 100% 100%, 0 100%); }
.arr-down { clip-path: polygon(0 0, 100% 0, 50% 100%); }
.arr-left { clip-path: polygon(100% 0, 100% 100%, 0 50%); }
.arr-right { clip-path: polygon(0 0, 100% 50%, 0 100%); }
.hsb { height: 14px; display: flex; gap: 1px; align-items: stretch; flex: none; }
.hsb .arr { height: 100%; }
.hsb-left { margin: 5px 1px 0; width: 148px; }
.rv-replace { margin-top: 1px; height: 34px; padding: 2px 1px 4px 4px; border-top: 1px solid #000; border-bottom: 1px solid #000; }
.dd { display: flex; align-items: center; justify-content: space-between; font: bold 15px "Liberation Mono", monospace; padding: 0 6px; white-space: nowrap; }
.replace { height: 26px; }
.ddmark { width: 12px; height: 6px; background: #c9f5f5; border-bottom: 2px solid #5d8f8f; border-right: 2px solid #5d8f8f; }
.rv-head-r { padding: 1px 1px 1px 2px; }
.btn-cat { width: 205px; line-height: 22px; }
.meas { font: bold 15px/26px "Liberation Mono", monospace; width: 54px; padding-left: 1px; }
.measdd { width: 60px; }
.rv-lists-r { height: 119px; padding-top: 1px; }
.list-right { width: 302px; padding: 2px; height: 116px; border-color: #52cbae #9beed6 #9beed6 #52cbae; }
.rv-lists-r .vsb { margin-left: 4px; }
.list-right .sel { margin-bottom: 1px; line-height: 16px; }
.hsb-right { margin: 3px 0 0 2px; width: 300px; }
.navrow { display: flex; height: 24px; margin-top: 2px; gap: 4px; padding-left: 2px; align-items: stretch; flex: none; }
.nav { width: 44px; text-align: center; font: bold 15px/19px "Liberation Mono", monospace; }
.nav-l { width: 53px; }
.navlabel { font: bold 15px/24px "Liberation Mono", monospace; width: 54px; margin-left: 1px; }
.indexinput { width: 58px; margin-left: 3px; border: 1px solid; border-color: #2a7f6c #9beed6 #9beed6 #2a7f6c; font: 15px/18px "Liberation Mono", monospace; padding-left: 6px; position: relative; }
.ibeam { position: absolute; left: 3px; top: 3px; width: 1px; height: 14px; background: #222; }
.zoomrow { display: flex; height: 34px; margin-top: 1px; align-items: center; flex: none; }
.zoombox { width: 222px; height: 34px; flex: none; display: flex; border: 1px solid #000; }
.zoompad { width: 125px; padding: 2px 2px 2px 6px; background: #52cbae; border-right: 2px solid #000; }
.autozoom { height: 28px; }
.svlabel { width: 28px; background: #9ddcdc; font: bold 15px/32px "Liberation Mono", monospace; }
.svgreen { flex: 1; background: #14e014; padding: 2px 2px 2px 7px; }
.svbtn { height: 26px; background: #14e014; border: 2px solid; border-color: #a0f5a0 #0a8a0a #0a8a0a #a0f5a0; display: flex; align-items: center; justify-content: flex-end; padding-right: 4px; }
.showchk { width: 13px; height: 13px; margin-left: 4px; margin-top: -2px; border: 1px solid; border-color: #2a7f6c #9beed6 #9beed6 #2a7f6c; }
.showlabel { font: bold 15px "Liberation Mono", monospace; margin-left: 4px; white-space: nowrap; margin-top: -5px; }
.toolrow { flex: 1; display: flex; justify-content: flex-end; gap: 5px; padding: 1px 2px 2px 0; }
.toolbtn { width: 29px; height: 28px; flex: none; padding: 2px; }
.toolwide { width: 32px; }
.toolin { height: 100%; border: 1px solid #000; display: flex; flex-direction: column; align-items: center; overflow: hidden; font: 10px/10px "Liberation Serif", serif; }
.toolin span { display: block; }
.dot { width: 7px; height: 7px; border-radius: 50%; border: 1px solid #000; margin-top: 1px; }
.dot-r { background: #f01010; }
.dot-g { background: #10e010; }
.undo { width: 12px; height: 9px; }
.rv-status { height: 13px; text-align: center; font: bold 15px/22px "Liberation Mono", monospace; white-space: pre; overflow: hidden; }

/* histogram window */
.hist { left: 1470px; top: 402px; width: 467px; height: 569px; }
.hist .wtitle { height: 30px; }
.hist-body { height: 539px; padding: 5px 4px 0; }
.hist-top { display: flex; height: 286px; gap: 3px; }
.hist-left { width: 102px; flex: none; display: flex; flex-direction: column; background: #9ddcdc; border: 2px solid #123; }
.radios { height: 135px; border-bottom: 2px solid #123; margin-top: -1px; }
.radio { height: 27px; display: flex; align-items: center; gap: 5px; padding-left: 5px; font: bold 15px "Liberation Mono", monospace; }
.dia { width: 10px; height: 10px; transform: rotate(45deg); border: 2px solid; border-color: #d6ffff #5d8f8f #5d8f8f #d6ffff; flex: none; margin: 0 2px; }
.dia-on { background: #c80050; border-color: #fff #fff #5d2040 #5d2040; }
.metricbox { flex: 1; display: flex; flex-direction: column; }
.metriclist { flex: 1; display: flex; min-height: 0; }
.metricsunk { width: 84px; padding: 6px 0 0 3px; border-top: 0; border-left: 2px solid #5d8f8f; }
.metricsunk .sel { width: 72px; }
.vsb-c { margin: 1px 1px 2px 3px; }
.vsb-c .arr, .hsb-c .arr { background: #c9f5f5; }
.vsb-c .arr::after, .hsb-c .arr::after { background: #6fa8a8; }
.metricbtns { display: flex; gap: 4px; padding: 3px 0 0 2px; height: 33px; flex: none; }
.metricbtns .toolbtn { width: 30px; }
.chart { width: 352px; flex: none; background: #9ddcdc; border: 2px solid #123; display: flex; flex-direction: column; height: 284px; }
.chart-title { align-self: center; margin-top: 2px; width: 259px; height: 22px; border: 1px solid #000; border-right: 3px solid #5d8f8f; border-bottom: 3px solid #5d8f8f; background: #b0f8f8; font: italic bold 14.800px/21px "Liberation Mono", monospace; text-align: center; white-space: nowrap; flex: none; }
.bars { height: 143px; flex: none; display: flex; align-items: flex-end; padding-left: 5px; border-bottom: 4px solid #000; margin-bottom: 1px; }
.barcol { width: 55px; display: flex; flex-direction: column; align-items: center; flex: none; }
.val { font: bold 14px/16px "Liberation Mono", monospace; }
.val-red { color: #c82020; }
.bar { width: 56px; border: 1px solid #000; margin-right: -1px; }
.b-red { background: #ff1e1e; }
.b-yel { background: #ffff14; }
.b-grn { background: #14e614; }
.cells { display: flex; height: 29px; padding-left: 5px; flex: none; overflow: hidden; }
.cell { width: 56px; margin-right: -1px; border: 1px solid #000; font: bold 14px/15px "Liberation Mono", monospace; padding-left: 18px; color: #101010; flex: none; }
.cell span { display: block; }
.c2 { padding-left: 9px; }
.hsb-c { margin: 7px 1px 0 1px; }
.chart-foot { flex: 1; min-height: 0; display: flex; border-top: 2px solid #000; margin-top: 1px; }
.footlist { width: 91px; flex: none; padding: 4px 0 0 3px; font: bold 15px/18px "Liberation Mono", monospace; border-right: 2px solid #c9f5f5; }
.footsel { width: 82px; line-height: 15px; margin-bottom: 1px; }
.footsb { width: 13px; margin: 1px 2px; }
.res { flex: 1; border-left: 2px solid #000; padding: 0 3px; }
.res-title { text-align: center; font: bold 15px/18px "Liberation Mono", monospace; }
.res-val { font: bold 15px/18px "Liberation Mono", monospace; padding-left: 23px; margin-top: 5px; }
.res-track { height: 16px; border: 2px solid; border-color: #5d8f8f #c9f5f5 #c9f5f5 #5d8f8f; background: #86b8b8; padding-left: 19px; }
.res-thumb { width: 30px; height: 12px; background: linear-gradient(90deg, #a8dcdc 0 14px, #5d8f8f 14px 15px, #a8dcdc 15px); }
.sash { height: 11px; position: relative; border-top: 2px solid #c9f5f5; }
.sashmark { position: absolute; right: 9px; top: 1px; width: 9px; height: 9px; background: #3ca88e; border: 1px solid #2a7f6c; }
.overview { margin: 0 1px 0 2px; height: 162px; background: #52cbae; border: 1px solid #1c3a34; }
.ov-svg { display: block; width: 100%; height: 100%; }
.hist-row { display: flex; height: 41px; margin: 2px 2px 0; gap: 4px; align-items: center; }
.toolbtn-b { width: 30px; height: 40px; padding: 3px 2px 6px; }
.msgbox { width: 307px; height: 41px; margin: 0 2px 0 -2px; background: #9ddcdc; border: 1px solid #000; font: 15px/39px "Liberation Mono", monospace; padding-left: 2px; white-space: pre; flex: none; }
.iconbtn { width: 38px; height: 40px; padding: 4px 2px; flex: none; }
.toolsvg { display: block; width: 30px; height: 30px; }
.closebtn { margin: 7px 1px 0 -2px; height: 24px; text-align: center; font: 15px/19px "Liberation Mono", monospace; color: #101010; }
```
